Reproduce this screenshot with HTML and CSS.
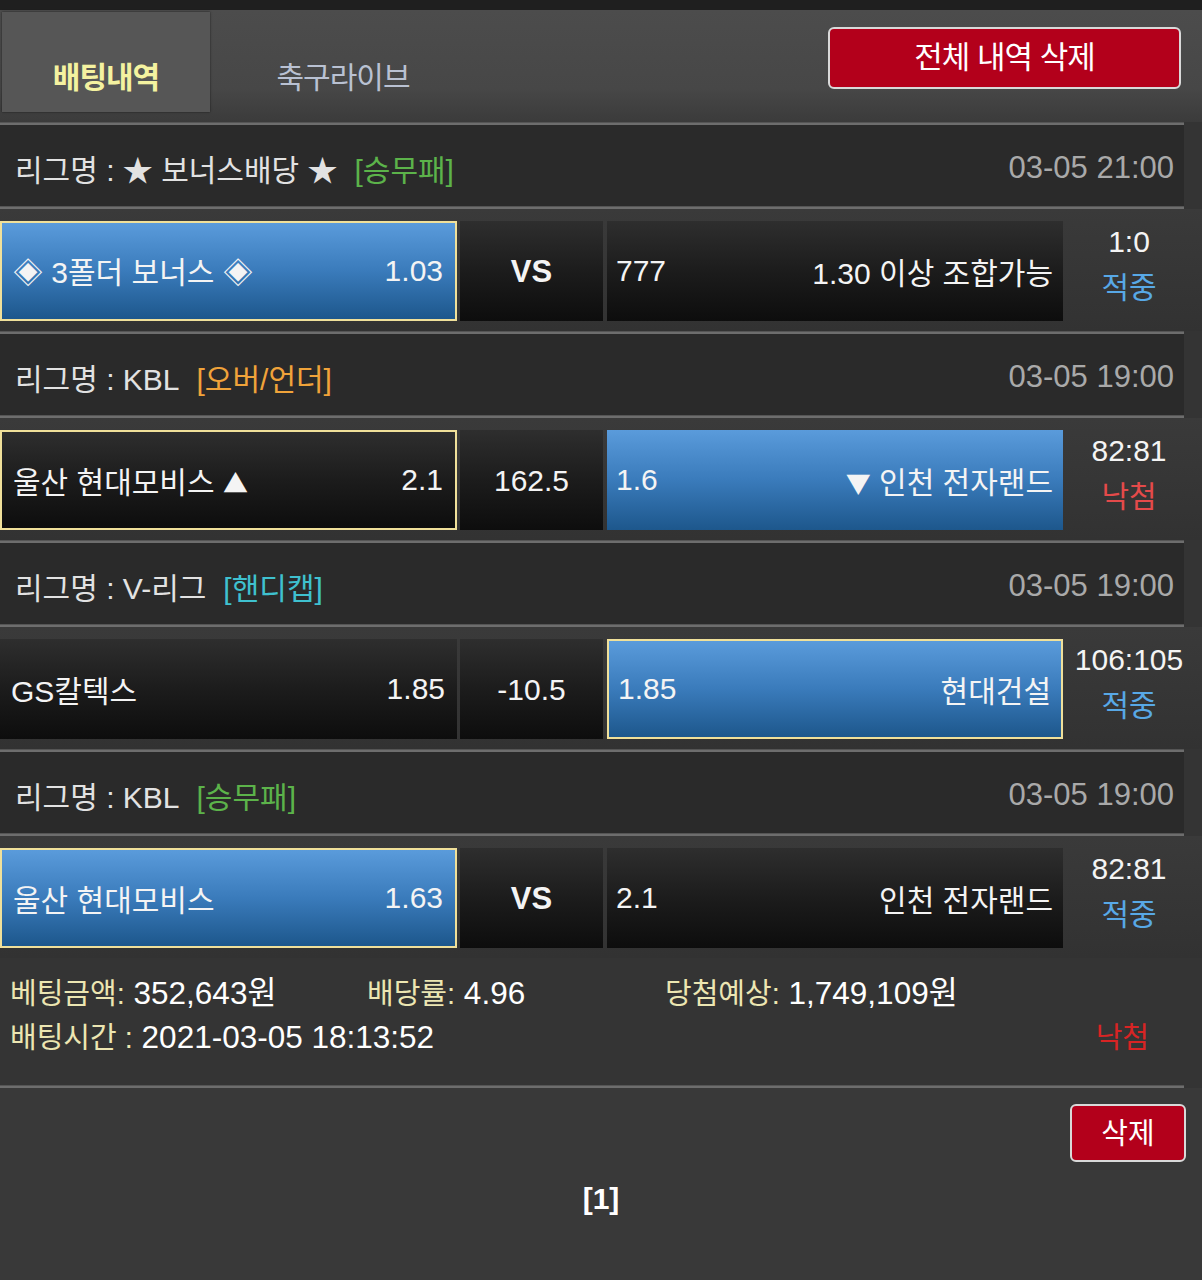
FILE: index.html
```html
<!DOCTYPE html>
<html lang="ko">
<head>
<meta charset="utf-8">
<title>배팅내역</title>
<link rel="stylesheet" href="styles.css">
</head>
<body>
<div class="page">
  <div class="topbar"></div>
  <div class="header">
    <div class="tab active">배팅내역</div>
    <div class="tab">축구라이브</div>
    <div class="spacer"></div>
    <button class="btn-red btn-all">전체 내역 삭제</button>
  </div>
  <div class="sep"></div>

  <div class="league">
    <span class="lname">리그명 : ★ 보너스배당 ★</span><span class="tag green">[승무패]</span>
    <span class="date">03-05 21:00</span>
  </div>
  <div class="sep"></div>
  <div class="match">
    <div class="cell c1 blue picked"><span>◈ 3폴더 보너스 ◈</span><span>1.03</span></div>
    <div class="cell c2"><b class="vs">VS</b></div>
    <div class="cell c3"><span>777</span><span>1.30 이상 조합가능</span></div>
    <div class="score"><div>1:0</div><div class="hit">적중</div></div>
  </div>
  <div class="sep"></div>

  <div class="league">
    <span class="lname">리그명 : KBL</span><span class="tag orange">[오버/언더]</span>
    <span class="date">03-05 19:00</span>
  </div>
  <div class="sep"></div>
  <div class="match">
    <div class="cell c1 picked"><span>울산 현대모비스 <i class="tri">▲</i></span><span>2.1</span></div>
    <div class="cell c2"><span>162.5</span></div>
    <div class="cell c3 blue"><span>1.6</span><span><i class="tri">▼</i> 인천 전자랜드</span></div>
    <div class="score"><div>82:81</div><div class="miss">낙첨</div></div>
  </div>
  <div class="sep"></div>

  <div class="league">
    <span class="lname">리그명 : V-리그</span><span class="tag cyan">[핸디캡]</span>
    <span class="date">03-05 19:00</span>
  </div>
  <div class="sep"></div>
  <div class="match">
    <div class="cell c1"><span>GS칼텍스</span><span>1.85</span></div>
    <div class="cell c2"><span>-10.5</span></div>
    <div class="cell c3 blue picked"><span>1.85</span><span>현대건설</span></div>
    <div class="score"><div>106:105</div><div class="hit">적중</div></div>
  </div>
  <div class="sep"></div>

  <div class="league">
    <span class="lname">리그명 : KBL</span><span class="tag green">[승무패]</span>
    <span class="date">03-05 19:00</span>
  </div>
  <div class="sep"></div>
  <div class="match">
    <div class="cell c1 blue picked"><span>울산 현대모비스</span><span>1.63</span></div>
    <div class="cell c2"><b class="vs">VS</b></div>
    <div class="cell c3"><span>2.1</span><span>인천 전자랜드</span></div>
    <div class="score"><div>82:81</div><div class="hit">적중</div></div>
  </div>

  <div class="summary">
    <div class="srow">
      <div class="s1"><span class="lbl">베팅금액:</span> 352,643원</div>
      <div class="s2"><span class="lbl">배당률:</span> 4.96</div>
      <div class="s3"><span class="lbl">당첨예상:</span> 1,749,109원</div>
    </div>
    <div class="srow">
      <div class="stime"><span class="lbl">배팅시간 :</span> 2021-03-05 18:13:52</div>
      <div class="sres">낙첨</div>
    </div>
  </div>
  <div class="sep"></div>

  <div class="bottom">
    <div class="delrow"><button class="btn-red btn-del">삭제</button></div>
    <div class="pager">[1]</div>
  </div>
</div>
</body>
</html>
```

FILE: styles.css
```css
* { box-sizing: border-box; }
html, body {
  margin: 0;
  padding: 0;
  background: #353535;
}
body {
  font-family: "Liberation Sans", "Noto Sans CJK KR", sans-serif;
  color: #ffffff;
  font-size: 30px;
}
.page {
  width: 1202px;
  height: 1280px;
  overflow: hidden;
  background: #343434;
  display: flex;
  flex-direction: column;
}
.topbar {
  height: 10px;
  background: #1f1f1f;
}
.header {
  height: 112px;
  display: flex;
  align-items: flex-start;
  padding: 2px 21px 0 2px;
  background: linear-gradient(#4c4c4c, #474747 70%, #3b3b3b);
}
.tab {
  height: 100px;
  display: flex;
  align-items: center;
  justify-content: center;
  padding-top: 26px;
  font-family: "Noto Sans CJK KR", sans-serif;
  font-size: 30px;
  letter-spacing: -1px;
}
.tab.active {
  width: 208px;
  background: #565656;
  color: #f4f2a0;
  font-weight: bold;
  box-shadow: 0 0 2px rgba(0,0,0,0.6);
}
.tab:not(.active) {
  width: 266px;
  color: #b9c1d2;
}
.spacer { flex: 1; }
.btn-red {
  background: #b3001b;
  color: #ffffff;
  border: 2px solid #d9d9d9;
  border-radius: 6px;
  font-family: "Noto Sans CJK KR", sans-serif;
  cursor: pointer;
  padding: 0;
}
.btn-all {
  margin-top: 15px;
  width: 353px;
  height: 62px;
  font-size: 31px;
  letter-spacing: -1px;
  padding-bottom: 7px;
}
.sep {
  width: 1184px;
  height: 3px;
  background: #6d6d6d;
  border-top: 1px solid #555;
}
.league {
  width: 1184px;
  height: 81px;
  background: #2a2a2a;
  display: flex;
  align-items: center;
  padding: 4px 10px 0 15px;
  color: #e2e2e2;
}
.tag { margin-left: 17px; }
.green { color: #5cb34a; }
.orange { color: #f0a33a; }
.cyan { color: #3fc1cf; }
.date {
  margin-left: auto;
  color: #a9a9a9;
  font-size: 31px;
}
.match {
  height: 122px;
  display: flex;
  align-items: flex-start;
  padding-top: 12px;
  background: linear-gradient(#3a3a3a, #323232);
}
.cell {
  height: 100px;
  display: flex;
  align-items: center;
  justify-content: space-between;
  background: linear-gradient(#2e2e2e, #1c1c1c 50%, #0d0d0d);
  color: #f4f4f4;
}
.cell span { white-space: nowrap; }
.tri {
  font-style: normal;
  font-family: "Noto Sans CJK KR", sans-serif;
  font-size: 25px;
}
.c1 {
  width: 457px;
  margin-right: 3px;
  padding: 0 12px 0 11px;
}
.c2 {
  width: 143px;
  margin-right: 4px;
  justify-content: center;
  padding-top: 2px;
}
.c3 {
  width: 456px;
  padding: 0 10px 0 9px;
}
.blue {
  background: linear-gradient(#5a9bdb, #3a7bbb 50%, #1d578c);
}
.picked {
  border: 2px solid #f0e09a;
}
.vs {
  font-weight: bold;
  font-size: 31px;
}
.score {
  width: 132px;
  margin-top: -2px;
  text-align: center;
  line-height: 46px;
  font-size: 30px;
  color: #f4f4f4;
  white-space: nowrap;
}
.hit { color: #58a8e6; }
.miss { color: #e44a4a; }
.summary {
  width: 1184px;
  height: 127px;
  padding: 14px 35px 0 10px;
  line-height: 43px;
  font-size: 31.5px;
  color: #ffffff;
}
.srow {
  display: flex;
  align-items: center;
}
.lbl {
  color: #ece6b2;
  font-size: 29px;
}
.s1 { width: 357px; }
.s2 { width: 298px; }
.stime { flex: 1; }
.sres {
  color: #d82424;
  font-size: 29px;
}
.bottom {
  flex: 1;
  background: #393939;
}
.delrow {
  display: flex;
  justify-content: flex-end;
  padding: 16px 16px 0 0;
}
.btn-del {
  width: 116px;
  height: 58px;
  font-size: 29px;
  padding-bottom: 4px;
}
.pager {
  text-align: center;
  font-weight: bold;
  font-size: 30px;
  margin-top: 20px;
}
```
